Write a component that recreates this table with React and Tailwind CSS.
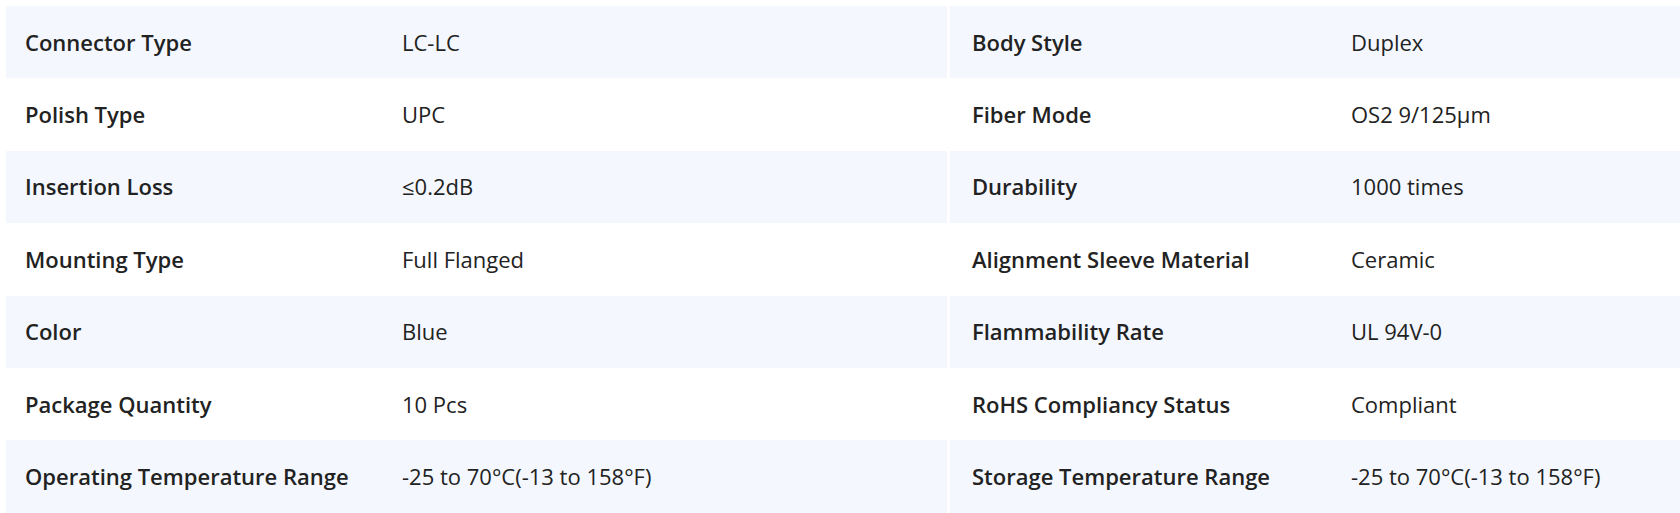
import React from "react";

const left = [
  ["Connector Type", "LC-LC"],
  ["Polish Type", "UPC"],
  ["Insertion Loss", "≤0.2dB"],
  ["Mounting Type", "Full Flanged"],
  ["Color", "Blue"],
  ["Package Quantity", "10 Pcs"],
  ["Operating Temperature Range", "-25 to 70°C(-13 to 158°F)"],
];

const right = [
  ["Body Style", "Duplex"],
  ["Fiber Mode", "OS2 9/125μm"],
  ["Durability", "1000 times"],
  ["Alignment Sleeve Material", "Ceramic"],
  ["Flammability Rate", "UL 94V-0"],
  ["RoHS Compliancy Status", "Compliant"],
  ["Storage Temperature Range", "-25 to 70°C(-13 to 158°F)"],
];

function Column({ rows, pad, labelW }) {
  return (
    <div className="flex flex-col w-[941px] shrink-0">
      {rows.map(([k, v], i) => (
        <div
          key={k}
          className={
            "flex items-center h-[72.4px] " +
            pad +
            " " +
            (i % 2 === 0 ? "bg-[#f4f8fe]" : "bg-white")
          }
        >
          <div className={labelW + " shrink-0 font-semibold text-[#222222]"}>{k}</div>
          <div className="text-[#222222]">{v}</div>
        </div>
      ))}
    </div>
  );
}

export default function App() {
  return (
    <div
      className="w-[1680px] h-[513px] overflow-hidden bg-white pt-[6px] pl-[6px] text-[22px]"
      style={{ fontFamily: '"Open Sans", sans-serif' }}
    >
      <div className="flex gap-[3px]">
        <Column rows={left} pad="pl-[19px]" labelW="w-[377px]" />
        <Column rows={right} pad="pl-[22px]" labelW="w-[379px]" />
      </div>
    </div>
  );
}
